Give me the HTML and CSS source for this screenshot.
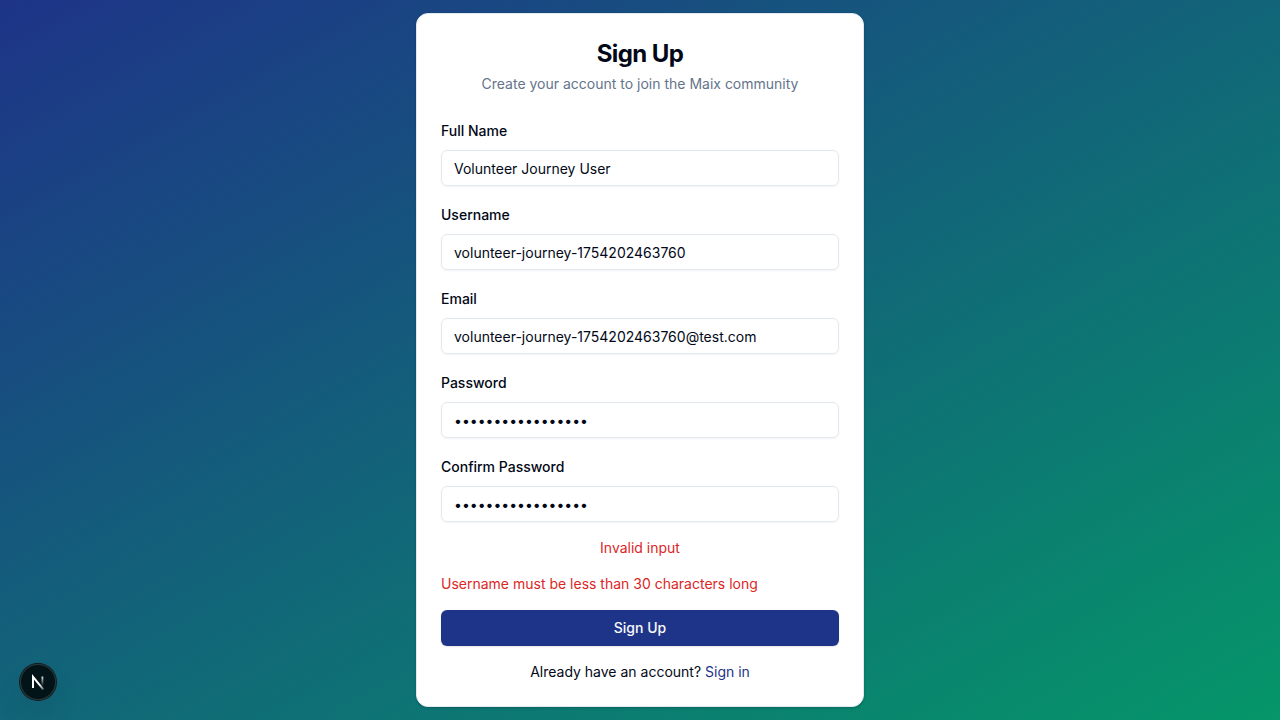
FILE: index.html
```html
<!DOCTYPE html>
<html lang="en">
<head>
<meta charset="utf-8">
<meta name="viewport" content="width=device-width, initial-scale=1">
<title>Sign Up</title>
<link rel="stylesheet" href="styles.css">
</head>
<body>
<main class="page">
  <section class="card">
    <header class="card-header">
      <h1 class="title">Sign Up</h1>
      <p class="subtitle">Create your account to join the Maix community</p>
    </header>
    <form class="form">
      <div class="field">
        <label class="label" for="name">Full Name</label>
        <input class="input" id="name" type="text" value="Volunteer Journey User">
      </div>
      <div class="field">
        <label class="label" for="username">Username</label>
        <input class="input" id="username" type="text" value="volunteer-journey-1754202463760">
      </div>
      <div class="field">
        <label class="label" for="email">Email</label>
        <input class="input" id="email" type="email" value="volunteer-journey-1754202463760@test.com">
      </div>
      <div class="field">
        <label class="label" for="password">Password</label>
        <input class="input" id="password" type="password" value="TestPassword12345">
      </div>
      <div class="field">
        <label class="label" for="confirm">Confirm Password</label>
        <input class="input" id="confirm" type="password" value="TestPassword12345">
      </div>
      <p class="error error-center">Invalid input</p>
      <p class="error">Username must be less than 30 characters long</p>
      <button class="submit" type="submit">Sign Up</button>
    </form>
    <p class="footer">Already have an account? <a class="link" href="#">Sign in</a></p>
  </section>
</main>
<button class="dev-badge" type="button" aria-label="Open developer tools">
  <svg class="dev-icon" viewBox="0 0 36 36" fill="none" aria-hidden="true">
    <defs>
      <linearGradient id="diag" x1="20" y1="20" x2="25" y2="26" gradientUnits="userSpaceOnUse">
        <stop stop-color="#fff"/><stop offset="1" stop-color="#fff" stop-opacity="0.2"/>
      </linearGradient>
      <linearGradient id="stem" x1="22" y1="13" x2="22" y2="22" gradientUnits="userSpaceOnUse">
        <stop stop-color="#fff" stop-opacity="0.85"/><stop offset="1" stop-color="#fff" stop-opacity="0"/>
      </linearGradient>
    </defs>
    <path d="M23.3 25.4L13 12.9V24" stroke="url(#diag)" stroke-width="2"/>
    <path d="M22.4 12.5V23" stroke="url(#stem)" stroke-width="1.8"/>
  </svg>
</button>
</body>
</html>
```
FILE: styles.css
```css
*, *::before, *::after { box-sizing: border-box; }
body { margin: 0; font-family: Inter, "Liberation Sans", sans-serif; font-size: 14px; line-height: 20px; color: #020817; }
h1, p { margin: 0; }
.page { min-height: 100vh; display: flex; align-items: center; justify-content: center; background: linear-gradient(to bottom right, #1e3488, #059669); }
.card { width: 100%; max-width: 448px; padding: 24px; background: #fff; border: 1px solid #e2e8f0; border-radius: 12px; box-shadow: 0 1px 3px rgba(0,0,0,.1), 0 1px 2px rgba(0,0,0,.1); }
.card-header { display: flex; flex-direction: column; gap: 4px; padding-bottom: 24px; text-align: center; }
.title { font-size: 24px; line-height: 32px; font-weight: 700; letter-spacing: -0.025em; }
.subtitle { color: #64748b; }
.form { display: flex; flex-direction: column; gap: 16px; }
.field { display: flex; flex-direction: column; gap: 8px; padding-top: 2px; }
.label { font-weight: 500; line-height: 22px; }
.input { width: 100%; height: 36px; padding: 4px 12px; font: inherit; color: inherit; background: transparent; border: 1px solid #e2e8f0; border-radius: 6px; box-shadow: 0 1px 2px rgba(0,0,0,.05); }
.error { color: #dc2626; }
.error-center { text-align: center; }
.submit { height: 36px; font: inherit; font-weight: 500; color: #f8fafc; background: #1e3488; border: 0; border-radius: 6px; box-shadow: 0 1px 2px rgba(0,0,0,.1); }
.footer { margin-top: 16px; text-align: center; }
.link { color: #1e3488; text-decoration: none; }
.dev-badge { position: fixed; left: 20px; bottom: 20px; width: 36px; height: 36px; padding: 0; border: 0; border-radius: 50%; background: rgba(0,0,0,.8); box-shadow: 0 0 0 1px #171717, inset 0 0 0 1px hsla(0,0%,100%,.14), 0 16px 32px -8px rgba(0,0,0,.24); }
.dev-icon { display: block; width: 36px; height: 36px; }
```
